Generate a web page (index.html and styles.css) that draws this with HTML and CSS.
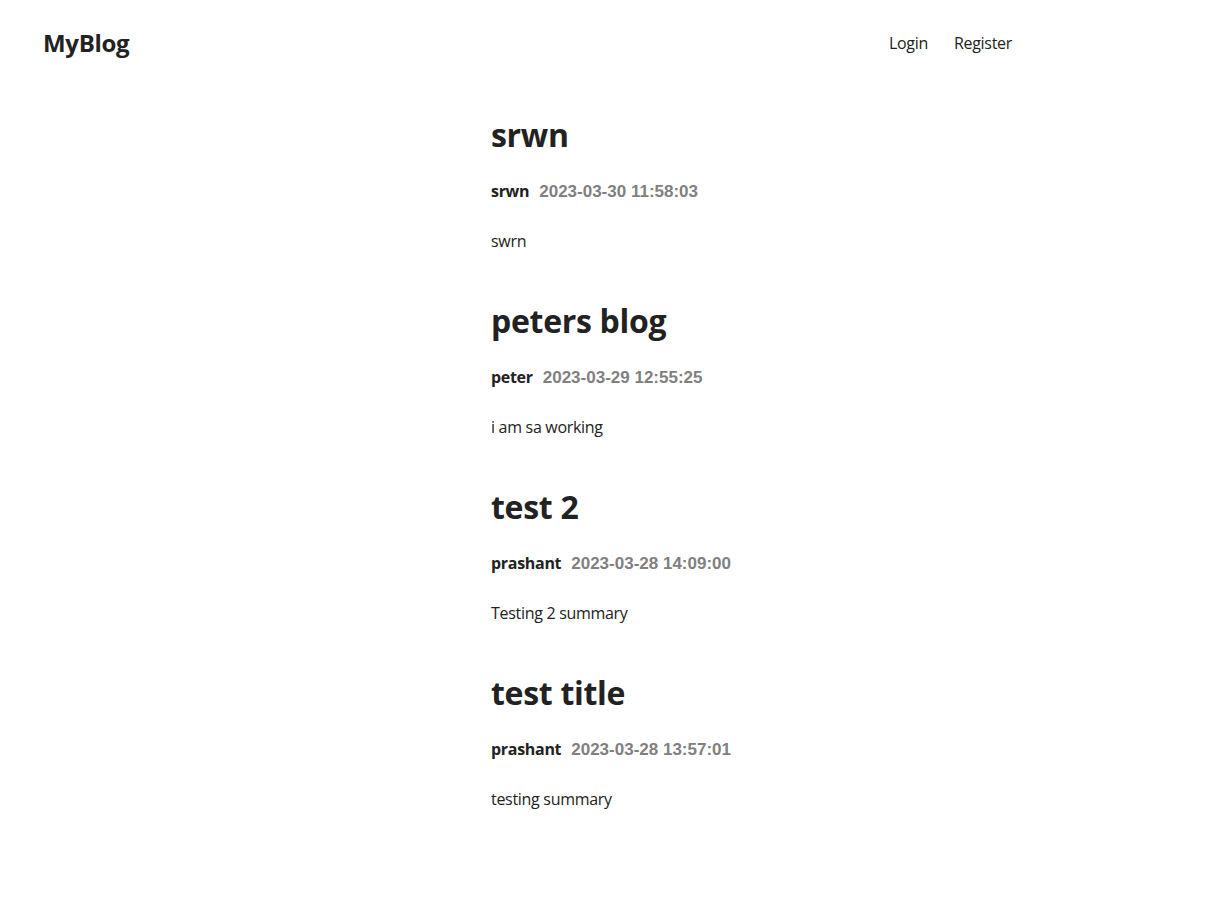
FILE: index.html
```html
<!DOCTYPE html>
<html lang="en">
<head>
<meta charset="utf-8">
<title>MyBlog</title>
<link rel="stylesheet" href="styles.css">
</head>
<body>
<header class="site-header">
  <a class="brand" href="#">MyBlog</a>
  <nav class="nav">
    <a href="#">Login</a>
    <a href="#">Register</a>
  </nav>
</header>
<main class="posts">
  <article class="post">
    <h1 class="post-title">srwn</h1>
    <div class="post-meta"><span class="author">srwn</span><span class="date">2023-03-30 11:58:03</span></div>
    <p class="summary">swrn</p>
  </article>
  <article class="post">
    <h1 class="post-title">peters blog</h1>
    <div class="post-meta"><span class="author">peter</span><span class="date">2023-03-29 12:55:25</span></div>
    <p class="summary">i am sa working</p>
  </article>
  <article class="post">
    <h1 class="post-title">test 2</h1>
    <div class="post-meta"><span class="author">prashant</span><span class="date">2023-03-28 14:09:00</span></div>
    <p class="summary">Testing 2 summary</p>
  </article>
  <article class="post">
    <h1 class="post-title">test title</h1>
    <div class="post-meta"><span class="author">prashant</span><span class="date">2023-03-28 13:57:01</span></div>
    <p class="summary">testing summary</p>
  </article>
</main>
</body>
</html>
```
FILE: styles.css
```css
* { box-sizing: border-box; }
body {
  margin: 0;
  font-family: "Segoe UI", "Open Sans", "Noto Sans", sans-serif;
  letter-spacing: -0.3px;
  color: #222;
  background: #fff;
}
a { color: inherit; text-decoration: none; }
.site-header {
  display: flex;
  justify-content: space-between;
  align-items: center;
  padding: 29px 211px 0 43px;
}
.brand {
  font-size: 24px;
  font-weight: 700;
  line-height: 28px;
}
.nav {
  display: flex;
  gap: 26px;
  font-size: 16px;
  line-height: 24px;
}
.posts {
  padding: 58px 0 0 491px;
}
.post { margin-bottom: 48px; }
.post-title {
  margin: 0;
  font-size: 32px;
  line-height: 40px;
  font-weight: 700;
}
.post-meta {
  margin-top: 24px;
  height: 24px;
  font-size: 16px;
  line-height: 24px;
  display: flex;
  align-items: baseline;
  gap: 10px;
  overflow: hidden;
}
.author { font-weight: 700; }
.date {
  font-family: "Liberation Sans", Arial, sans-serif;
  font-size: 17px;
  letter-spacing: 0;
  font-weight: 700;
  color: #808080;
}
.summary {
  margin: 26px 0 0;
  font-size: 16px;
  line-height: 24px;
}
```
